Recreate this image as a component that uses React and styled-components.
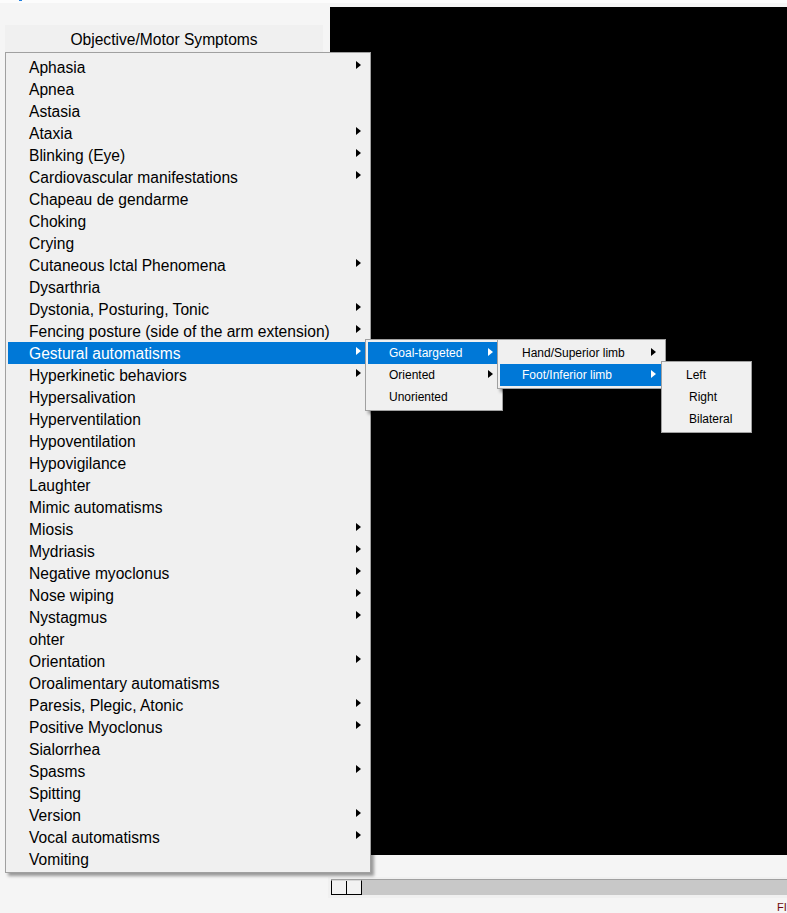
import React from 'react';
import styled, { createGlobalStyle } from 'styled-components';

const GlobalStyle = createGlobalStyle`
    html, body {
        margin: 0;
        padding: 0;
        background: #f5f5f5;
    }
    body {
        font-family: "Liberation Sans", Arial, sans-serif;
    }
`

const Page = styled.div`
    position: relative;
    width: 787px;
    height: 913px;
    overflow: hidden;
    background: #f5f5f5;
    display: flex;
    flex-direction: column;
`

const TopStrip = styled.div`
    flex-shrink: 0;
    height: 3px;
    margin-bottom: 4px;
    background: #fcfcfc;
    display: flex;
`

const BlueMark = styled.span`
    width: 3px;
    height: 1px;
    margin-left: 19px;
    background: #1f7fe0;
`

const Main = styled.div`
    flex-shrink: 0;
    display: grid;
    grid-template-columns: 330px 1fr;
    height: 848px;
`

const LeftPanel = styled.div`
    padding: 18px 7px 0 5px;
`

const HeaderButton = styled.div`
    height: 28px;
    box-sizing: border-box;
    padding-top: 2px;
    background: #f0f0f0;
    display: flex;
    align-items: center;
    justify-content: center;
    font-size: 15.6px;
    color: #000;
`

const Viewport = styled.div`
    background: #000;
`

const ScrollBand = styled.div`
    flex-shrink: 0;
    margin: 22px 0 0 328px;
    padding: 2px 0 3px 3px;
    background: #f0f0f0;
`

const Track = styled.div`
    height: 16px;
    box-sizing: border-box;
    border-top: 1px solid #a0a0a0;
    background: #c8c8c8;
    display: flex;
`

const Thumb = styled.div`
    width: 31px;
    height: 15px;
    box-sizing: border-box;
    border: 1px solid #000;
    border-top-color: #d8d8d8;
    background: #f2f2f2;
    display: flex;
`

const ThumbHalf = styled.div`
    flex: 1;
    & + & {
        border-left: 1px solid #000;
    }
`

const Status = styled.div`
    flex-shrink: 0;
    padding: 4px 0 0 777px;
    font-size: 11px;
    line-height: 11px;
    color: #6e0a0a;
    white-space: nowrap;
`

const Menu = styled.div`
    position: absolute;
    left: ${props => props.left}px;
    top: ${props => props.top}px;
    width: ${props => props.width}px;
    box-sizing: border-box;
    background: #f0f0f0;
    border: 1px solid #a0a0a0;
    box-shadow: 3px 3px 3px rgba(0, 0, 0, 0.38);
    padding: ${props => props.padTop}px 4px 2px 2px;
`

const Item = styled.div`
    height: 22px;
    box-sizing: border-box;
    display: flex;
    align-items: center;
    padding: ${props => props.lift}px 5px 0 ${props => props.indent}px;
    font-size: ${props => props.size}px;
    color: ${props => props.active ? '#fff' : '#000'};
    background: ${props => props.active ? '#0078d7' : 'transparent'};
    white-space: nowrap;
`

const Label = styled.span`
    flex: 1;
`

const Arrow = styled.span`
    width: 0;
    height: 0;
    border-left: 5px solid ${props => props.active ? '#fff' : '#000'};
    border-top: 4.5px solid transparent;
    border-bottom: 4.5px solid transparent;
    transform: translateY(${props => props.shift}px);
`

const mainItems = [
    ['Aphasia', true],
    ['Apnea'],
    ['Astasia'],
    ['Ataxia', true],
    ['Blinking (Eye)', true],
    ['Cardiovascular manifestations', true],
    ['Chapeau de gendarme'],
    ['Choking'],
    ['Crying'],
    ['Cutaneous Ictal Phenomena', true],
    ['Dysarthria'],
    ['Dystonia, Posturing, Tonic', true],
    ['Fencing posture (side of the arm extension)', true],
    ['Gestural automatisms', true, true],
    ['Hyperkinetic behaviors', true],
    ['Hypersalivation'],
    ['Hyperventilation'],
    ['Hypoventilation'],
    ['Hypovigilance'],
    ['Laughter'],
    ['Mimic automatisms'],
    ['Miosis', true],
    ['Mydriasis', true],
    ['Negative myoclonus', true],
    ['Nose wiping', true],
    ['Nystagmus', true],
    ['ohter'],
    ['Orientation', true],
    ['Oroalimentary automatisms'],
    ['Paresis, Plegic, Atonic', true],
    ['Positive Myoclonus', true],
    ['Sialorrhea'],
    ['Spasms', true],
    ['Spitting'],
    ['Version', true],
    ['Vocal automatisms', true],
    ['Vomiting'],
]

const goalItems = [
    ['Goal-targeted', true, true],
    ['Oriented', true],
    ['Unoriented'],
]

const limbItems = [
    ['Hand/Superior limb', true],
    ['Foot/Inferior limb', true, true],
]

const sideItems = [
    ['Left', false, false, 22],
    ['Right', false, false, 25],
    ['Bilateral', false, false, 25],
]

const MenuList = ({ items, size, indent, lift, arrowShift, ...rest }) => {
    return <Menu {...rest}>
        {items.map(([text, sub, active, ind]) =>
            <Item key={text} size={size} lift={lift} indent={ind || indent} active={active}>
                <Label>{text}</Label>
                {sub && <Arrow active={active} shift={arrowShift} />}
            </Item>
        )}
    </Menu>
}

const App = () => {
    return <Page>
        <GlobalStyle />
        <TopStrip>
            <BlueMark />
        </TopStrip>
        <Main>
            <LeftPanel>
                <HeaderButton>Objective/Motor Symptoms</HeaderButton>
            </LeftPanel>
            <Viewport />
        </Main>
        <ScrollBand>
            <Track>
                <Thumb>
                    <ThumbHalf />
                    <ThumbHalf />
                </Thumb>
            </Track>
        </ScrollBand>
        <Status>FI</Status>

        <MenuList items={mainItems} size={15.6} indent={21} lift={2} arrowShift={-3} left={5} top={52} width={366} padTop={3} />
        <MenuList items={goalItems} size={12} indent={21} lift={0} arrowShift={-1} left={365} top={339} width={138} padTop={2} />
        <MenuList items={limbItems} size={12} indent={22} lift={0} arrowShift={-1} left={497} top={339} width={169} padTop={2} />
        <MenuList items={sideItems} size={12} indent={22} lift={0} arrowShift={-1} left={661} top={361} width={91} padTop={2} />
    </Page>
}

export default App;
